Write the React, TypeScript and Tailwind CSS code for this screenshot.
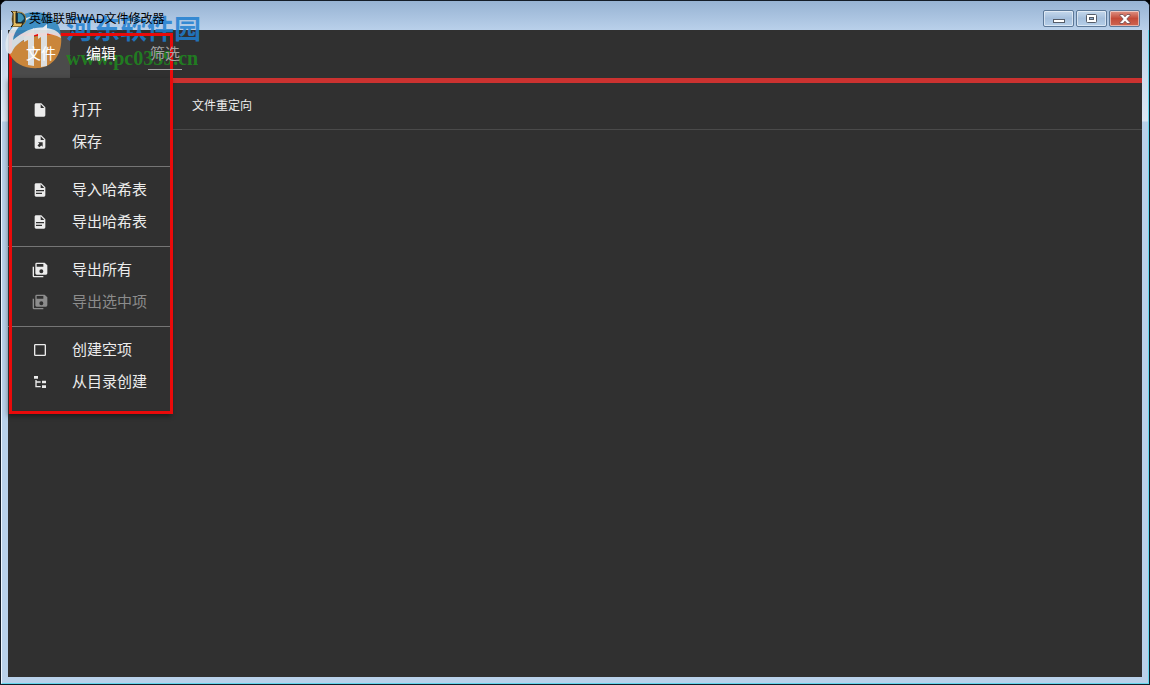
import React from "react";

interface MenuEntry {
  label: string;
  icon: string;
  disabled?: boolean;
}

const ICONS = {
  file: "M13,9V3.5L18.5,9M6,2C4.89,2 4,2.89 4,4V20A2,2 0 0,0 6,22H18A2,2 0 0,0 20,20V8L14,2H6Z",
  fileExport:
    "M6,2C4.89,2 4,2.9 4,4V20A2,2 0 0,0 6,22H18A2,2 0 0,0 20,20V8L14,2M13,3.5L18.5,9H13M8.93,12.22H16V19.29L13.88,17.17L11.05,20L8.22,17.17L11.05,14.35",
  fileDocument:
    "M13,9H18.5L13,3.5V9M6,2H14L20,8V20A2,2 0 0,1 18,22H6C4.89,22 4,21.1 4,20V4C4,2.89 4.89,2 6,2M15,18V16H6V18H15M18,14V12H6V14H18Z",
  saveAll:
    "M17,7V3H7V7H17M14,17A3,3 0 0,0 17,14A3,3 0 0,0 14,11A3,3 0 0,0 11,14A3,3 0 0,0 14,17M19,1L23,5V17A2,2 0 0,1 21,19H7C5.89,19 5,18.1 5,17V3A2,2 0 0,1 7,1H19M1,7H3V21H17V23H3A2,2 0 0,1 1,21V7Z",
  blank:
    "M19,3H5C3.89,3 3,3.89 3,5V19A2,2 0 0,0 5,21H19A2,2 0 0,0 21,19V5C21,3.89 20.1,3 19,3M19,5V19H5V5H19Z",
  tree: "M3,3H9V7H3V3M15,10H21V14H15V10M15,17H21V21H15V17M13,13H7V18H13V20H5V9H7V11H13V13Z",
};

const MENU_GROUPS: MenuEntry[][] = [
  [
    { label: "打开", icon: ICONS.file },
    { label: "保存", icon: ICONS.fileExport },
  ],
  [
    { label: "导入哈希表", icon: ICONS.fileDocument },
    { label: "导出哈希表", icon: ICONS.fileDocument },
  ],
  [
    { label: "导出所有", icon: ICONS.saveAll },
    { label: "导出选中项", icon: ICONS.saveAll, disabled: true },
  ],
  [
    { label: "创建空项", icon: ICONS.blank },
    { label: "从目录创建", icon: ICONS.tree },
  ],
];

const AppIcon = () => (
  <svg viewBox="0 0 16 16" className="h-4 w-4 shrink-0" aria-hidden="true">
    <circle cx="9" cy="8" r="7" fill="#17394c" stroke="#b28b3c" />
    <path d="M8 2a6 6 0 0 1 6 6l-3 3H8z" fill="#3d93b5" />
    <path d="M1 0h6l-1 2v10h7l-2 4H1l2-2V2z" fill="#e3bd62" stroke="#21180a" />
  </svg>
);

const TitleBar = () => {
  const frame =
    "flex h-[17px] items-center justify-center rounded-[2px] border border-[#5c7898] shadow-[inset_0_0_0_1px_#ffffff80]";
  return (
    <header className="flex h-[29px] items-center bg-linear-to-b from-[#97b3d3] to-[#b9d0ea] px-[9px]">
      {/* stays above the watermark */}
      <div className="relative z-30 flex flex-1 items-center gap-[3px] pt-[6px]">
        <AppIcon />
        <h1 className="text-[12px] leading-4 text-black">英雄联盟WAD文件修改器</h1>
      </div>
      <div className="flex gap-[2px] pt-[6px]">
        <button aria-label="最小化" className={`${frame} w-[31px] bg-linear-to-b from-[#c5d8ec] via-[#a5bfdc] to-[#b6cfe9]`}>
          <svg width="12" height="11" viewBox="0 0 12 11">
            <rect x=".5" y="6.5" width="11" height="3" fill="#fff" stroke="#555c68" />
          </svg>
        </button>
        <button aria-label="最大化" className={`${frame} w-[31px] bg-linear-to-b from-[#c5d8ec] via-[#a5bfdc] to-[#b6cfe9]`}>
          <svg width="11" height="9" viewBox="0 0 11 9">
            <rect x=".5" y=".5" width="10" height="8" rx="1" fill="#fff" stroke="#555c68" />
            <rect x="3.5" y="3.5" width="4" height="2" fill="#8daccc" stroke="#555c68" />
          </svg>
        </button>
        <button aria-label="关闭" className={`${frame} w-[31px] bg-linear-to-b from-[#dd9285] via-[#c34a38] to-[#cf6550]`}>
          <svg width="12" height="10" viewBox="0 0 12 10">
            <path d="M1 .5h3l2 2.3L8 .5h3v1L7.8 5 11 8.5v1H8L6 7.2 4 9.5H1v-1L4.2 5 1 1.5z" fill="#fff" stroke="#6b4a50" strokeWidth=".8" />
          </svg>
        </button>
      </div>
    </header>
  );
};

const FileMenu = () => (
  <div role="menu" className="absolute top-full left-0 z-10 w-[163px] bg-[#303030] py-4 shadow-[0_2px_5px_#00000070]">
    {MENU_GROUPS.map((group, index) => (
      <React.Fragment key={index}>
        {index > 0 && <hr className="mt-2 mb-[7px] border-[#757575]" />}
        {group.map((entry) => (
          <button
            key={entry.label}
            role="menuitem"
            disabled={entry.disabled}
            className="flex h-8 w-full items-center gap-6 pl-6 text-left text-[15px] whitespace-nowrap text-[#ececec] disabled:text-[#8c8c8c]"
          >
            <svg viewBox="0 0 24 24" className="h-4 w-4 shrink-0 fill-current" aria-hidden="true">
              <path d={entry.icon} fillRule="evenodd" />
            </svg>
            <span>{entry.label}</span>
          </button>
        ))}
      </React.Fragment>
    ))}
  </div>
);

const Watermark = () => (
  <div className="pointer-events-none absolute top-[7px] left-[3px] flex gap-[2px]">
    <svg viewBox="0 0 60 64" className="relative z-25 h-16 w-[60px] opacity-90" aria-hidden="true">
      <path d="M4 33C5 15 15 4 31 4c15 0 25 9 26 24L42 22 20 26 7 44C4 41 4 37 4 33z" fill="#3288c0" />
      <path d="M5 45c7-9 15-15 28-17 12-2 20-3 24-1 2 18-7 31-22 33C21 61 10 56 5 45z" fill="#d88d3a" />
      <path d="M2 42C-1 27 10 12 29 8 18 14 10 22 9 32c12-10 23-14 33-12 9 1 14 4 15 10-9-5-20-6-29-2C18 32 11 37 8 44c-1 3-5 2-6-2z" fill="#e3ebf0" />
      <path d="M12 29c5-5 10-7 15-9l-1-6c-7 3-12 9-14 15z" fill="#3288c0" />
      <path d="M20 29 30 20v38l-6-1V32l-4 2zM34 24l9-8v42l-6 1V29l-3 2z" fill="#eceff0" />
    </svg>
    <div className="relative z-15 flex flex-col whitespace-nowrap">
      <span className="pt-2 text-[27px] leading-7 font-bold text-[#1f7fd0]/85">河东软件园</span>
      <span className="font-['Liberation_Serif',serif] text-[20px] leading-7 font-bold text-[#1f8a1f]/85">www.pc0359.cn</span>
    </div>
  </div>
);

export default function App() {
  return (
    <div className="min-h-screen bg-black font-['Liberation_Sans','Noto_Sans_CJK_SC',sans-serif]">
      <div className="relative flex min-h-screen flex-col overflow-hidden rounded-t-[7px] border border-[#141d28] bg-[#b9d1ea]">
        <TitleBar />
        <div className="flex flex-1 flex-col border-r border-b border-l border-r-[#62d7ed] border-b-[#62d7ed] border-l-[#eef6ff] bg-linear-to-b from-[#bed1e8] from-0% via-[#dce7f4] via-[91px] to-[#b9d1ea] to-[92px] px-[6px] pb-[6px]">
          <main className="flex flex-1 flex-col bg-[#303030]">
            <nav className="relative flex h-12 items-center pl-1 text-[15px] text-white">
              <button className="h-full w-[58px] bg-[#4b4b4b]">
                <span className="relative z-30">文件</span>
              </button>
              <button className="h-full w-[62px]">
                <span className="relative z-30">编辑</span>
              </button>
              <input
                type="text"
                aria-label="筛选"
                placeholder="筛选"
                className="relative z-30 ml-4 h-8 w-[34px] border-b border-[#a5a5a5] bg-transparent px-[2px] placeholder:text-[#a3a3a3] focus:outline-none"
              />
              <FileMenu />
            </nav>
            <section className="flex-1 border-t-5 border-[#cb3230]">
              <div className="flex h-[47px] items-center border-b border-[#4a4a4a] pl-[184px] text-[12px] text-[#ededed]">
                <h2>文件重定向</h2>
              </div>
            </section>
          </main>
        </div>
        {/* highlight frame around the open menu */}
        <div className="pointer-events-none absolute top-8 left-2 z-20 h-[381px] w-[164px] border-3 border-[#ea0a0a]" />
        <Watermark />
      </div>
    </div>
  );
}
